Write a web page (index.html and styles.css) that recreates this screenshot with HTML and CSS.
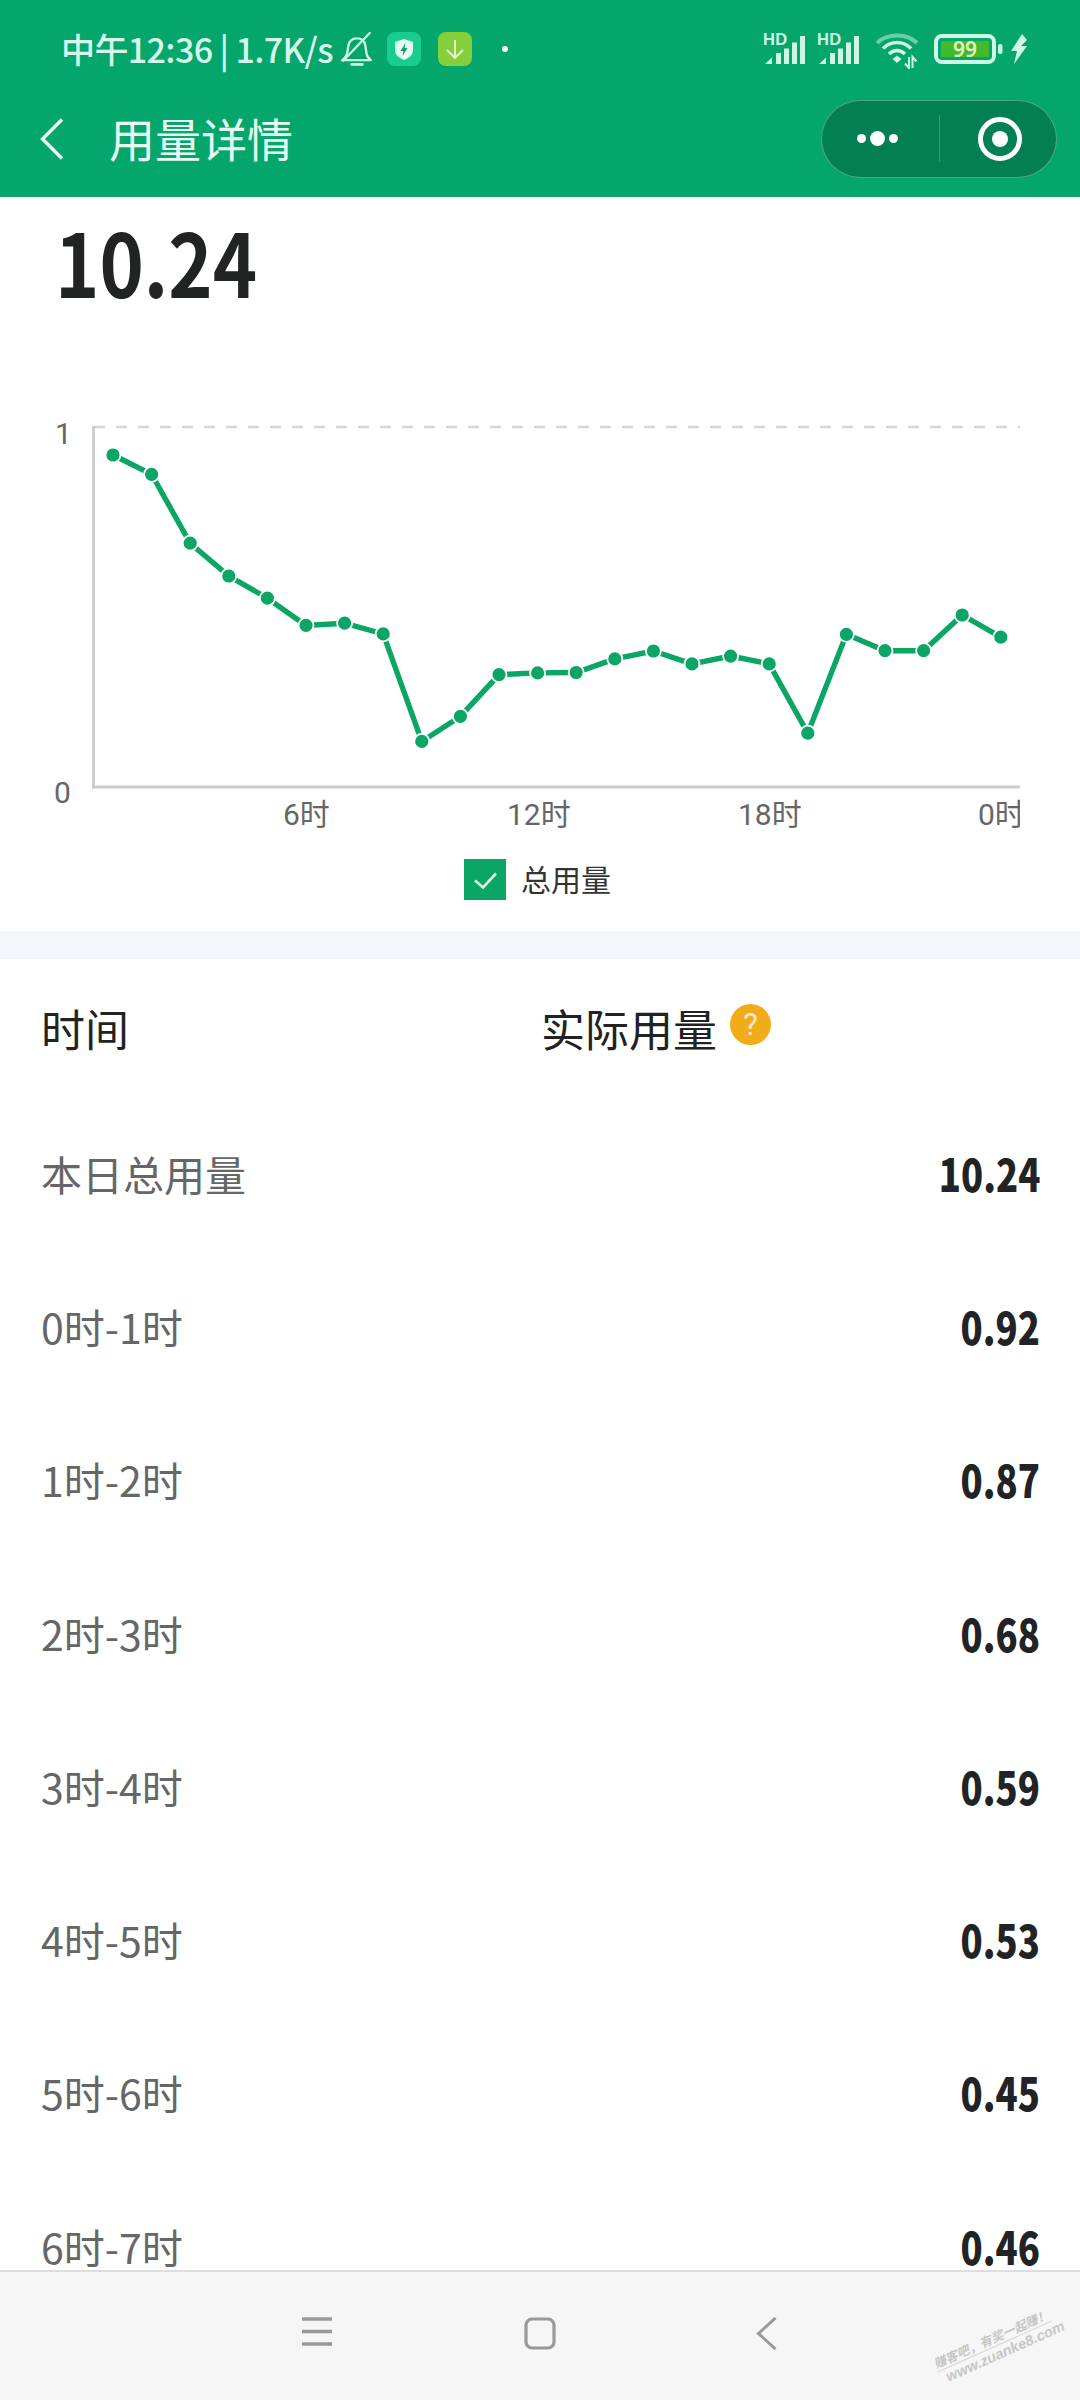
FILE: index.html
```html
<!DOCTYPE html>
<html lang="zh">
<head>
<meta charset="utf-8">
<title>用量详情</title>
<link rel="stylesheet" href="styles.css">
</head>
<body>
<div class="phone">
  <header class="header">
    <div class="status">
      <span class="status-text">中午12:36 | 1.7K/s</span>
      <svg class="ic-bell" width="34" height="34" viewBox="0 0 32 32" fill="none" stroke="#CFF7E6" stroke-width="2.200" stroke-linecap="round" stroke-linejoin="round">
        <path d="M2 26.500c3-2 4.500-4 5-8l1-6c.8-4 4-6.500 8-6.500s7 2.500 7.800 6.500l1.200 8c.4 2.500 1.500 4 4 6H2z"/>
        <path d="M3 27L28 1"/>
        <path d="M11 30.500h10" stroke-width="2.600"/>
      </svg>
      <svg class="ic-app" width="34" height="34" viewBox="0 0 34 34">
        <rect width="34" height="34" rx="8" fill="#17CE8F"/>
        <path d="M17 7l9 3v8c0 5-4 8-9 10-5-2-9-5-9-10v-8z" fill="#E4FBF2"/>
        <path d="M18.500 11l-5 8h3l-1 5 5-8h-3z" fill="#0E9C68"/>
      </svg>
      <svg class="ic-app ic-app2" width="34" height="34" viewBox="0 0 34 34">
        <rect width="34" height="34" rx="8" fill="#86CF3C"/>
        <path d="M17 8v18M9 18l8 8 8-8" fill="none" stroke="#E9F9D5" stroke-width="1.800"/>
      </svg>
      <span class="status-dot"></span>
      <div class="status-right">
        <svg class="ic-signal" width="43" height="44" viewBox="0 -6 43 44">
          <text x="0" y="12" class="hd">HD</text>
          <path d="M2 31l7-6.500V31zM13 20h5v11h-5zM21 15.500h5V31h-5zM29 9.500h5V31h-5zM37 3h5v28h-5z" fill="#CFF7E6"/>
        </svg>
        <svg class="ic-signal" width="43" height="44" viewBox="0 -6 43 44">
          <text x="0" y="12" class="hd">HD</text>
          <path d="M2 31l7-6.500V31zM13 20h5v11h-5zM21 15.500h5V31h-5zM29 9.500h5V31h-5zM37 3h5v28h-5z" fill="#CFF7E6"/>
        </svg>
        <svg class="ic-wifi" width="44" height="36" viewBox="0 0 44 36" fill="none" stroke-linecap="butt">
          <path d="M1 10C11 0 31 0 41 10" stroke="#CFF7E6" stroke-opacity=".5" stroke-width="4"/>
          <path d="M7 15.500c8-8 20-8 28 0" stroke="#CFF7E6" stroke-width="3.600"/>
          <path d="M13 21c5-4.500 11-4.500 16 0" stroke="#CFF7E6" stroke-width="3.600"/>
          <path d="M16.500 26l4.500-3.600 4.500 3.600-4.500 4z" fill="#CFF7E6"/>
          <path d="M33 24v11l-4-4.500M36.500 35V24l4 4.500" stroke="#CFF7E6" stroke-width="2"/>
        </svg>
        <svg class="ic-battery" width="70" height="30" viewBox="0 0 70 30">
          <rect x="2" y="2" width="58" height="26" rx="6" fill="none" stroke="#CFF7E6" stroke-width="4"/>
          <rect x="7" y="7" width="48" height="16" rx="1" fill="#45B82C"/>
          <text x="31" y="23" class="batt">99</text>
          <rect x="64" y="10" width="4.500" height="10" rx="2" fill="#CFF7E6"/>
        </svg>
        <svg class="ic-bolt" width="18" height="30" viewBox="0 0 18 30">
          <path d="M12 0L1 17h6L4 30l13-18h-6l6-6z" fill="#CFF7E6"/>
        </svg>
      </div>
    </div>
    <div class="titlebar">
      <svg class="ic-back" width="24" height="42" viewBox="0 0 24 42" fill="none" stroke="#E8FBF3" stroke-width="3.400">
        <path d="M22 1.500L2.500 21 22 40.500"/>
      </svg>
      <h1 class="title">用量详情</h1>
      <div class="capsule">
        <div class="capsule-dots"><i class="dot-s"></i><i class="dot-l"></i><i class="dot-s"></i></div>
        <span class="capsule-line"></span>
        <svg width="44" height="44" viewBox="0 0 44 44" class="capsule-target">
          <circle cx="22" cy="22" r="19.500" fill="none" stroke="#fff" stroke-width="5"/>
          <circle cx="22" cy="22" r="8" fill="#fff"/>
        </svg>
      </div>
    </div>
  </header>

  <main class="main">
    <section class="total"><span class="total-num">10.24</span></section>

    <svg class="chart" width="1080" height="441" viewBox="0 399 1080 441">
      <defs><clipPath id="plot"><rect x="0" y="400" width="1020" height="440"/></clipPath></defs>
      <g clip-path="url(#plot)">
        <path d="M94 427H1020" class="grid"/>
        <path d="M93.500 426V787H1020" class="axis"/>
        <text x="55" y="444" class="tick">1</text>
        <text x="54" y="803" class="tick">0</text>
        <text x="283" y="825" class="tick">6时</text>
        <text x="507" y="825" class="tick">12时</text>
        <text x="738" y="825" class="tick">18时</text>
        <text x="978" y="825" class="tick">0时</text>
      </g>
      <polyline class="line" points="113,455 151.600,474.300 190.200,543.200 228.800,576 267.400,598.200 306,625.400 344.600,623.200 383.200,633.900 421.800,741.400 460.400,716.400 499,674.600 537.600,672.900 576.200,672.500 614.800,658.900 653.400,651 692,663.900 730.600,656.100 769.200,663.900 807.800,733.200 846.400,634.300 885,650.700 923.600,650.700 962.200,615 1000.800,637.100"/>
      <g class="pts">
        <circle cx="113" cy="455" r="7.500"/><circle cx="151.600" cy="474.300" r="7.500"/><circle cx="190.200" cy="543.200" r="7.500"/><circle cx="228.800" cy="576" r="7.500"/><circle cx="267.400" cy="598.200" r="7.500"/><circle cx="306" cy="625.400" r="7.500"/><circle cx="344.600" cy="623.200" r="7.500"/><circle cx="383.200" cy="633.900" r="7.500"/><circle cx="421.800" cy="741.400" r="7.500"/><circle cx="460.400" cy="716.400" r="7.500"/><circle cx="499" cy="674.600" r="7.500"/><circle cx="537.600" cy="672.900" r="7.500"/><circle cx="576.200" cy="672.500" r="7.500"/><circle cx="614.800" cy="658.900" r="7.500"/><circle cx="653.400" cy="651" r="7.500"/><circle cx="692" cy="663.900" r="7.500"/><circle cx="730.600" cy="656.100" r="7.500"/><circle cx="769.200" cy="663.900" r="7.500"/><circle cx="807.800" cy="733.200" r="7.500"/><circle cx="846.400" cy="634.300" r="7.500"/><circle cx="885" cy="650.700" r="7.500"/><circle cx="923.600" cy="650.700" r="7.500"/><circle cx="962.200" cy="615" r="7.500"/><circle cx="1000.800" cy="637.100" r="7.500"/>
      </g>
    </svg>

    <div class="legend">
      <span class="check">
        <svg width="42" height="41" viewBox="0 0 42 41" fill="none" stroke="#DDF8EC" stroke-width="2.600"><path d="M11 21.500l8 7 13-14"/></svg>
      </span>
      <span class="legend-label">总用量</span>
    </div>

    <div class="band"></div>

    <div class="thead">
      <span class="th-time">时间</span>
      <span class="th-usage">实际用量</span>
      <span class="help">?</span>
    </div>

    <div class="row"><span class="label">本日总用量</span><span class="value">10.24</span></div>
    <div class="row"><span class="label">0时-1时</span><span class="value">0.92</span></div>
    <div class="row"><span class="label">1时-2时</span><span class="value">0.87</span></div>
    <div class="row"><span class="label">2时-3时</span><span class="value">0.68</span></div>
    <div class="row"><span class="label">3时-4时</span><span class="value">0.59</span></div>
    <div class="row"><span class="label">4时-5时</span><span class="value">0.53</span></div>
    <div class="row"><span class="label">5时-6时</span><span class="value">0.45</span></div>
    <div class="row"><span class="label">6时-7时</span><span class="value">0.46</span></div>
  </main>

  <nav class="navbar">
    <svg width="30" height="30" viewBox="0 0 30 30" class="nav-menu"><path d="M0 2h30M0 14.500h30M0 27h30" stroke="#999" stroke-width="3.400"/></svg>
    <svg width="32" height="33" viewBox="0 0 32 33" class="nav-home"><rect x="2" y="2" width="28" height="29" rx="6" fill="none" stroke="#999" stroke-width="3.200"/></svg>
    <svg width="22" height="33" viewBox="0 0 22 33" class="nav-back"><path d="M19.500 1L2.500 16.500 19.500 32" fill="none" stroke="#999" stroke-width="3"/></svg>
  </nav>

  <div class="watermark">
    <span class="wm-cn">赚客吧，有奖一起赚！</span>
    <span class="wm-en">www.zuanke8.com</span>
  </div>
</div>
</body>
</html>
```

FILE: styles.css
```css
* { box-sizing: border-box; }
html, body { margin: 0; padding: 0; background: #fff; }
body { font-family: "Noto Sans CJK SC", "Noto Sans", sans-serif; }

.phone {
  position: relative;
  width: 1080px;
  height: 2400px;
  display: flex;
  flex-direction: column;
  overflow: hidden;
}

.header { background: #05A66B; height: 197px; flex: none; }

.status {
  display: flex;
  align-items: center;
  height: 98px;
  padding: 0 52px 0 61px;
}
.status-text {
  font-family: "Noto Sans CJK SC", sans-serif;
  font-size: 34px;
  font-weight: 500;
  line-height: 40px;
  color: #D6F8EA;
  width: 270px;
  white-space: nowrap;
  letter-spacing: -0.6px;
}
.ic-bell { margin-left: 9px; }
.ic-app { margin-left: 13px; }
.ic-app2 { margin-left: 17px; }
.status-dot {
  width: 6px;
  height: 6px;
  border-radius: 50%;
  background: #fff;
  margin-left: 30px;
}
.status-right {
  margin-left: auto;
  display: flex;
  align-items: center;
}
.ic-signal { margin-right: 11px; }
.ic-wifi { margin: 4px 14px 0 5px; }
.ic-battery { margin-right: 6px; }
.hd { font-family: "Liberation Sans", sans-serif; font-weight: 700; font-size: 16.500px; fill: #CFF7E6; letter-spacing: .3px; }
.batt { font-family: "Noto Sans", sans-serif; font-weight: 600; font-size: 21px; fill: #E1FBC3; text-anchor: middle; }

.titlebar {
  display: flex;
  align-items: center;
  height: 99px;
  padding: 0 23px 18px 40px;
}
.title {
  margin: -3px 0 0 45px;
  font-size: 46px;
  line-height: 60px;
  font-weight: 400;
  color: #E8FBF3;
}
.capsule {
  margin-left: auto;
  width: 236px;
  height: 78px;
  border: 1px solid rgba(255,255,255,.3);
  border-radius: 39px;
  background: #027F53;
  display: flex;
  align-items: center;
  padding-left: 35px;
}
.capsule-dots { display: flex; align-items: center; gap: 4px; width: 52px; }
.dot-s { width: 9px; height: 9px; border-radius: 50%; background: #fff; }
.dot-l { width: 15px; height: 15px; border-radius: 50%; background: #fff; }
.capsule-line { width: 1px; height: 47px; background: rgba(255,255,255,.22); margin-left: 30px; }
.capsule-target { margin-left: 38px; }

.main { flex: 1; min-height: 0; overflow: hidden; background: #fff; }

.total { height: 202px; padding-left: 55px; }
.total-num {
  display: inline-block;
  font-size: 88px;
  line-height: 110px;
  font-weight: 700;
  color: #212325;
  transform: scaleX(.855);
  transform-origin: left center;
  margin-top: 8px;
}

.chart { display: block; }
.grid { stroke: #D6D6D6; stroke-width: 2.500; stroke-dasharray: 11 11; fill: none; }
.axis { stroke: #CCC; stroke-width: 2.800; fill: none; }
.tick { font-family: "Roboto", "Noto Sans CJK SC", sans-serif; font-size: 30px; fill: #666; }
.line { fill: none; stroke: #0BA566; stroke-width: 5.400; }
.pts circle { fill: #0BA566; stroke: #fff; stroke-width: 1.800; }

.legend {
  display: flex;
  align-items: center;
  height: 41px;
  margin: 19px 0 31px 464px;
}
.check { width: 42px; height: 41px; background: #0BA566; display: block; }
.check svg { display: block; }
.legend-label { margin: -2px 0 0 15px; font-size: 30px; line-height: 41px; color: #333; }

.band { height: 28px; background: #F4F6FA; }

.thead {
  display: flex;
  align-items: center;
  height: 137px;
  padding-left: 41px;
  font-size: 44px;
  color: #222;
}
.th-time { width: 500px; line-height: 50px; }
.th-usage { line-height: 50px; }
.help {
  width: 41px;
  height: 41px;
  margin: -6px 0 0 13px;
  border-radius: 50%;
  background: #F0AC1B;
  color: #FBEBC8;
  font-family: "Roboto", sans-serif;
  font-size: 31px;
  line-height: 41px;
  text-align: center;
}

.row {
  display: flex;
  align-items: center;
  justify-content: space-between;
  height: 153.300px;
  padding: 0 40px 0 41px;
}
.label { font-size: 41px; line-height: 50px; color: #666; }
.value {
  font-size: 45px;
  line-height: 50px;
  font-weight: 900;
  color: #212325;
  transform: scaleX(.81);
  transform-origin: right center;
}

.navbar {
  flex: none;
  position: relative;
  height: 130px;
  background: #F6F6F6;
  border-top: 2px solid #DEDEDE;
  display: flex;
  align-items: flex-start;
  padding: 45px 0 0 302px;
}
.nav-home { margin-left: 192px; }
.nav-back { margin-left: 200px; }

.watermark {
  position: absolute;
  left: 932px;
  top: 2328px;
  width: 130px;
  transform: rotate(-24deg);
  display: flex;
  flex-direction: column;
  align-items: flex-start;
  color: #C6C6C6;
  font-style: italic;
  white-space: nowrap;
}
.wm-cn { font-size: 12.500px; line-height: 17px; border-bottom: 1px solid #D6D6D6; font-weight: 700; }
.wm-en { font-family: "Liberation Sans", sans-serif; font-size: 14.500px; line-height: 17px; font-weight: 700; padding-left: 6px; }
```
